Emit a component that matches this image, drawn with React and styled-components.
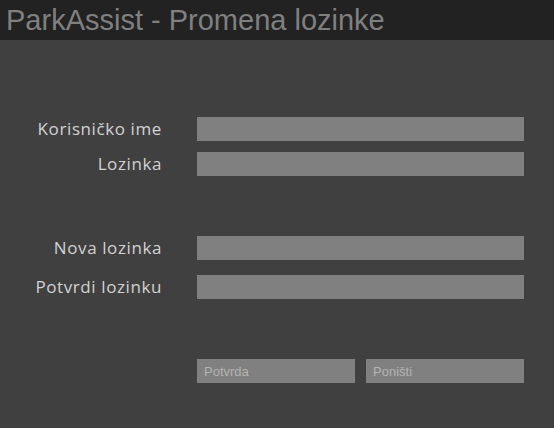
import React from "react";
import styled, { createGlobalStyle } from "styled-components";

const Global = createGlobalStyle`
  html, body { margin: 0; padding: 0; background: #404040; }
  body { width: 554px; height: 428px; overflow: hidden; }
`;

const Page = styled.div`
  width: 554px;
  height: 428px;
  background: #404040;
  display: flex;
  flex-direction: column;
`;

const Header = styled.header`
  height: 40px;
  background: #222222;
  display: flex;
  align-items: center;
  padding-left: 6px;
  box-sizing: border-box;
`;

const Title = styled.h1`
  margin: 0;
  font-family: "Liberation Sans", Arial, sans-serif;
  font-weight: normal;
  font-size: 29px;
  color: #808080;
  line-height: 1;
  padding-top: 1px;
  white-space: nowrap;
`;

const Form = styled.form`
  display: flex;
  flex-direction: column;
  padding-top: 77px;
`;

const Group = styled.div`
  display: grid;
  grid-template-columns: 197px 327px;
  row-gap: ${(p) => p.$gap}px;
  margin-bottom: ${(p) => p.$after}px;
`;

const Label = styled.label`
  font-family: "Open Sans", "Noto Sans", sans-serif;
  font-size: 17px;
  letter-spacing: 0.6px;
  color: #d2d2d2;
  text-align: right;
  padding-right: 35px;
  height: 24px;
  line-height: 24px;
  white-space: nowrap;
`;

const Input = styled.input`
  box-sizing: border-box;
  width: 327px;
  height: 24px;
  border: none;
  background: #808080;
  padding: 0 6px;
  margin: 0;
  outline: none;
`;

const Buttons = styled.div`
  display: flex;
  gap: 11px;
  padding-left: 197px;
`;

const Button = styled.button`
  box-sizing: border-box;
  width: 158px;
  height: 24px;
  border: none;
  margin: 0;
  background: #808080;
  color: #b4b4b4;
  font-family: "Liberation Sans", Arial, sans-serif;
  font-size: 13px;
  text-align: left;
  padding: 0 7px;
  cursor: pointer;
`;

export default function App() {
  return (
    <Page>
      <Global />
      <Header>
        <Title>ParkAssist - Promena lozinke</Title>
      </Header>
      <Form onSubmit={(e) => e.preventDefault()}>
        <Group $gap={11} $after={60}>
          <Label>Korisničko ime</Label>
          <Input type="text" />
          <Label>Lozinka</Label>
          <Input type="password" />
        </Group>
        <Group $gap={15} $after={60}>
          <Label>Nova lozinka</Label>
          <Input type="password" />
          <Label>Potvrdi lozinku</Label>
          <Input type="password" />
        </Group>
        <Buttons>
          <Button type="submit">Potvrda</Button>
          <Button type="button">Poništi</Button>
        </Buttons>
      </Form>
    </Page>
  );
}
